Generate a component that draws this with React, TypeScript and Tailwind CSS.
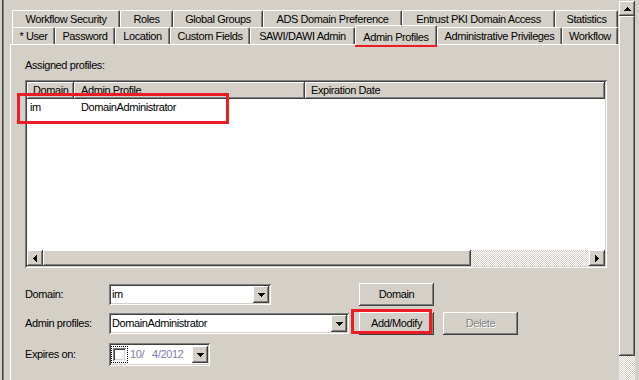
import React from "react";

const raised =
  "bg-[#d4d0c8] shadow-[inset_-1px_-1px_#404040,inset_1px_1px_#ffffff,inset_-2px_-2px_#808080,inset_2px_2px_#d4d0c8]";
const sunken =
  "shadow-[inset_1px_1px_#808080,inset_-1px_-1px_#ffffff,inset_2px_2px_#404040,inset_-2px_-2px_#d4d0c8]";
const checker =
  "bg-[image:repeating-conic-gradient(#ffffff_0_25%,#d4d0c8_0_50%)] bg-[length:2px_2px]";

type Dir = "up" | "down" | "left" | "right";

const arrowPaths: Record<Dir, { w: number; h: number; d: string }> = {
  down: { w: 7, h: 4, d: "M0 0h7v1H0z M1 1h5v1H1z M2 2h3v1H2z M3 3h1v1H3z" },
  up: { w: 7, h: 4, d: "M3 0h1v1H3z M2 1h3v1H2z M1 2h5v1H1z M0 3h7v1H0z" },
  left: { w: 4, h: 7, d: "M3 0h1v7H3z M2 1h1v5H2z M1 2h1v3H1z M0 3h1v1H0z" },
  right: { w: 4, h: 7, d: "M0 0h1v7H0z M1 1h1v5H1z M2 2h1v3H2z M3 3h1v1H3z" },
};

function Arrow({ dir }: { dir: Dir }) {
  const a = arrowPaths[dir];
  return (
    <svg width={a.w} height={a.h} viewBox={`0 0 ${a.w} ${a.h}`} shapeRendering="crispEdges">
      <path d={a.d} fill="#000" />
    </svg>
  );
}

const row1 = [
  { label: "Workflow Security", w: "w-[108px]" },
  { label: "Roles", w: "w-[53px]" },
  { label: "Global Groups", w: "w-[90px]" },
  { label: "ADS Domain Preference", w: "w-[139px]" },
  { label: "Entrust PKI Domain Access", w: "w-[153px]" },
  { label: "Statistics", w: "w-[63px]" },
];

const row2 = [
  { label: "* User", w: "w-[43px]" },
  { label: "Password", w: "w-[60px]" },
  { label: "Location", w: "w-[55px]" },
  { label: "Custom Fields", w: "w-[80px]" },
  { label: "SAWI/DAWI Admin", w: "w-[105px]" },
  { label: "Admin Profiles", w: "w-[82px]", selected: true },
  { label: "Administrative Privileges", w: "w-[125px]" },
  { label: "Workflow", w: "w-[56px]" },
];

function Tab({ label, w, selected }: { label: string; w: string; selected?: boolean }) {
  if (selected) {
    return (
      <div
        className={`relative z-10 -mt-[2px] h-[20px] ${w} shrink-0 rounded-t-[2px] border-t border-l border-white border-r border-r-[#404040] bg-[#d4d0c8] shadow-[inset_-1px_0_#808080] flex justify-center pt-[3px] whitespace-nowrap`}
      >
        {label}
      </div>
    );
  }
  return (
    <div
      className={`h-full ${w} shrink-0 rounded-t-[2px] border-t border-l border-white border-r border-r-[#404040] shadow-[inset_-1px_0_#808080] flex items-center justify-center whitespace-nowrap`}
    >
      {label}
    </div>
  );
}

function Combo({ w, value }: { w: string; value: string }) {
  return (
    <div className={`${w} h-[21px] bg-white ${sunken} p-[2px] flex`}>
      <div className="flex-1 pl-[1px] leading-[17px]">{value}</div>
      <div className={`w-[16px] h-[17px] ${raised} flex items-center justify-center`}>
        <Arrow dir="down" />
      </div>
    </div>
  );
}

function Btn({ label, disabled, className = "" }: { label: string; disabled?: boolean; className?: string }) {
  return (
    <button
      className={`w-[75px] h-[23px] ${raised} flex items-center justify-center ${
        disabled ? "text-[#808080] [text-shadow:1px_1px_#ffffff]" : "text-black"
      } ${className}`}
    >
      {label}
    </button>
  );
}

function AssignedList() {
  return (
    <div className={`mt-[8px] w-[582px] h-[188px] p-[2px] bg-white flex flex-col ${sunken}`}>
      <div className="flex h-[17px] shrink-0 leading-[17px]">
        <div className={`w-[47px] ${raised} pl-[6px]`}>Domain</div>
        <div className={`w-[231px] ${raised} pl-[7px]`}>Admin Profile</div>
        <div className={`flex-1 ${raised} pl-[6px]`}>Expiration Date</div>
      </div>
      <div className="flex-1">
        <div className="flex h-[17px] leading-[17px]">
          <div className="w-[47px] pl-[3px]">im</div>
          <div className="pl-[7px]">DomainAdministrator</div>
        </div>
      </div>
      <div className="flex h-[16px] shrink-0">
        <div className={`w-[16px] ${raised} flex items-center justify-center`}>
          <Arrow dir="left" />
        </div>
        <div className={`w-[428px] ${raised}`} />
        <div className={`flex-1 ${checker}`} />
        <div className={`w-[16px] ${raised} flex items-center justify-center`}>
          <Arrow dir="right" />
        </div>
      </div>
    </div>
  );
}

function Panel() {
  return (
    <div className="ml-[6px] w-[620px] flex-1 border-t border-l border-white pl-[14px] flex flex-col">
      <div className="mt-[14px] leading-[13px]">Assigned profiles:</div>
      <AssignedList />

      <div className="mt-[15px] h-[23px] flex items-center">
        <div className="w-[84px]">Domain:</div>
        <Combo w="w-[162px]" value="im" />
        <Btn label="Domain" className="ml-[88px]" />
      </div>

      <div className="mt-[6px] h-[23px] flex items-center">
        <div className="w-[84px]">Admin profiles:</div>
        <Combo w="w-[240px]" value="DomainAdministrator" />
        <Btn label="Add/Modify" className="ml-[10px]" />
        <Btn label="Delete" disabled className="ml-[9px]" />
      </div>

      <div className="mt-[8px] h-[23px] flex items-center">
        <div className="w-[84px]">Expires on:</div>
        <div className={`w-[101px] h-[23px] bg-white ${sunken} p-[2px] flex items-center`}>
          <div className="w-[17px] h-[17px] border border-dotted border-black flex items-center justify-center">
            <div className={`w-[13px] h-[13px] bg-white ${sunken}`} />
          </div>
          <span className="ml-[2px] text-[#8080a8] whitespace-nowrap">
            10/<span className="inline-block w-[8px]" />4/2012
          </span>
          <div className={`ml-auto w-[16px] h-[17px] ${raised} flex items-center justify-center`}>
            <Arrow dir="down" />
          </div>
        </div>
      </div>
    </div>
  );
}

function VScroll() {
  return (
    <div className="w-[16px] flex flex-col">
      <div className={`mt-[1px] h-[15px] ${raised} flex items-center justify-center`}>
        <Arrow dir="up" />
      </div>
      <div className={`h-[340px] ${raised}`} />
      <div className={`flex-1 ${checker}`} />
    </div>
  );
}

export default function App() {
  return (
    <div className="relative w-[639px] h-[380px] overflow-hidden bg-[#d4d0c8] flex text-[11px] text-black tracking-[-0.4px] font-['Liberation_Sans',Arial,sans-serif]">
      <div className="w-[2px]" />
      <div className="w-[1px] bg-[#404040]" />
      <div className="w-[1px] bg-[#808080]" />

      <div className="w-[615px] overflow-hidden flex flex-col">
        <div className="mt-[10px] h-[17px] flex pl-[8px]">
          {row1.map((t) => (
            <Tab key={t.label} label={t.label} w={t.w} />
          ))}
        </div>
        <div className="h-[17px] flex pl-[8px]">
          {row2.map((t) => (
            <Tab key={t.label} label={t.label} w={t.w} selected={t.selected} />
          ))}
        </div>
        <Panel />
      </div>

      <VScroll />
      <div className="w-[4px]" />

      {/* red annotation boxes */}
      <div className="absolute left-[355px] top-[26px] w-[82px] h-[21px] border-[3px] border-[#ed1c24]" />
      <div className="absolute left-[17px] top-[93px] w-[212px] h-[31px] border-[3px] border-[#ed1c24]" />
      <div className="absolute left-[351px] top-[309px] w-[81px] h-[25px] border-[3px] border-[#ed1c24]" />
    </div>
  );
}
